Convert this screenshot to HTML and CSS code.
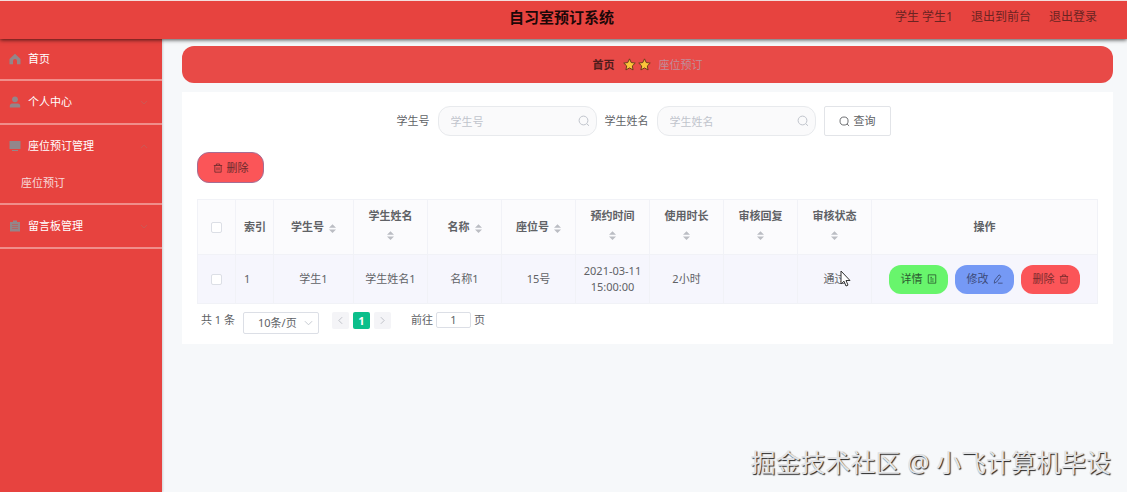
FILE: index.html
```html
<!DOCTYPE html>
<html lang="zh-CN">
<head>
    <meta charset="UTF-8">
    <meta name="viewport" content="width=device-width, initial-scale=1.0">
    <title>自习室预订系统</title>
    <link rel="stylesheet" href="styles.css">
</head>
<body>
    <!-- 公用图标 -->
    <svg class="icon-defs" aria-hidden="true">
        <symbol id="icon-search" viewBox="0 0 12 12">
            <circle cx="5.5" cy="5.5" r="4.4" fill="none" stroke="currentColor"/>
            <path d="M8.8 8.8l2.2 2" stroke="currentColor" fill="none"/>
        </symbol>
        <symbol id="icon-delete" viewBox="0 0 12 12">
            <path d="M1 3h10M4 3V1.2h4V3M2.2 3v8h7.6V3M4.8 5.2v3.6M7.2 5.2v3.6" stroke="currentColor" fill="none"/>
        </symbol>
        <symbol id="icon-arrow" viewBox="0 0 10 6">
            <path d="M1 1l4 4 4-4" stroke="currentColor" fill="none"/>
        </symbol>
        <symbol id="icon-sort" viewBox="0 0 8 10">
            <path d="M4 0l4 4H0zM4 10l4-4H0z" fill="currentColor"/>
        </symbol>
        <symbol id="icon-star" viewBox="0 0 12 12">
            <path d="M6 .8l1.6 3.4 3.7.5-2.7 2.6.7 3.7L6 9.200l-3.300 1.800.7-3.700L.7 4.700l3.700-.5z" fill="#fbc53a" stroke="#6b3a1c" stroke-width=".9" stroke-linejoin="round"/>
        </symbol>
    </svg>

    <header class="header">
        <h1 class="title">自习室预订系统</h1>
        <nav class="user-nav">
            <span>学生 学生1</span>
            <a href="#">退出到前台</a>
            <a href="#">退出登录</a>
        </nav>
    </header>

    <div class="layout">
        <aside class="sidebar">
            <ul class="menu">
                <li class="menu-item home">
                    <a href="#">
                        <svg class="menu-icon" viewBox="0 0 12 12"><path d="M6 .8L.5 6v5.200H4V8a2 2 0 0 1 4 0v3.200h3.500V6z" fill="currentColor"/></svg>
                        <span>首页</span>
                    </a>
                </li>
                <li class="menu-item">
                    <a href="#">
                        <svg class="menu-icon" viewBox="0 0 12 12"><circle cx="6" cy="3.300" r="2.900" fill="currentColor"/><path d="M.8 11.500V10q0-2.500 2.500-2.500h5.400q2.500 0 2.500 2.500v1.500z" fill="currentColor"/></svg>
                        <span>个人中心</span>
                        <svg class="menu-arrow"><use href="#icon-arrow"/></svg>
                    </a>
                </li>
                <li class="menu-item opened">
                    <a href="#">
                        <svg class="menu-icon" viewBox="0 0 12 12"><path d="M.5 1h11v8h-11zM3 10h6v1H3z" fill="currentColor"/></svg>
                        <span>座位预订管理</span>
                        <svg class="menu-arrow"><use href="#icon-arrow"/></svg>
                    </a>
                    <ul class="submenu">
                        <li><a href="#">座位预订</a></li>
                    </ul>
                </li>
                <li class="menu-item">
                    <a href="#">
                        <svg class="menu-icon" viewBox="0 0 12 12"><path d="M1 2h10v9.500H1zM4 .5h4V2H4z" fill="currentColor"/><path d="M3 4.500h6M3 6.500h6M3 8.500h6" stroke="#c9524f" stroke-width=".6"/></svg>
                        <span>留言板管理</span>
                        <svg class="menu-arrow"><use href="#icon-arrow"/></svg>
                    </a>
                </li>
            </ul>
        </aside>

        <main class="main">
            <nav class="breadcrumb">
                <a href="#" class="crumb-home">首页</a>
                <span class="stars">
                    <svg><use href="#icon-star"/></svg>
                    <svg><use href="#icon-star"/></svg>
                </span>
                <a href="#" class="crumb-current">座位预订</a>
            </nav>

            <section class="card">
                <form class="search-form">
                    <label for="code">学生号</label>
                    <div class="search-input">
                        <input type="text" id="code" placeholder="学生号">
                        <svg><use href="#icon-search"/></svg>
                    </div>
                    <label for="name">学生姓名</label>
                    <div class="search-input">
                        <input type="text" id="name" placeholder="学生姓名">
                        <svg><use href="#icon-search"/></svg>
                    </div>
                    <button type="button" class="btn-query"><svg><use href="#icon-search"/></svg>查询</button>
                </form>

                <button type="button" class="btn btn-remove"><svg><use href="#icon-delete"/></svg>删除</button>

                <table class="table">
                    <colgroup>
                        <col class="col-small"><col class="col-small"><col class="col-code">
                        <col span="7" class="col-data">
                        <col class="col-action">
                    </colgroup>
                    <thead>
                        <tr>
                            <th><input type="checkbox" aria-label="全选"></th>
                            <th class="index">索引</th>
                            <th>学生号<svg class="sort"><use href="#icon-sort"/></svg></th>
                            <th class="wrap">学生姓名<svg class="sort"><use href="#icon-sort"/></svg></th>
                            <th>名称<svg class="sort"><use href="#icon-sort"/></svg></th>
                            <th>座位号<svg class="sort"><use href="#icon-sort"/></svg></th>
                            <th class="wrap">预约时间<svg class="sort"><use href="#icon-sort"/></svg></th>
                            <th class="wrap">使用时长<svg class="sort"><use href="#icon-sort"/></svg></th>
                            <th class="wrap">审核回复<svg class="sort"><use href="#icon-sort"/></svg></th>
                            <th class="wrap">审核状态<svg class="sort"><use href="#icon-sort"/></svg></th>
                            <th>操作</th>
                        </tr>
                    </thead>
                    <tbody>
                        <tr>
                            <td><input type="checkbox" aria-label="选择第1行"></td>
                            <td class="index">1</td>
                            <td>学生1</td>
                            <td>学生姓名1</td>
                            <td>名称1</td>
                            <td>15号</td>
                            <td>2021-03-11 15:00:00</td>
                            <td>2小时</td>
                            <td></td>
                            <td>
                                <span class="status">通过
                                    <svg class="pointer" viewBox="0 0 11 17"><path d="M1 1v13l3-2.800 2 4.800 2-.9-2-4.600h4z" fill="#fff" stroke="#333"/></svg>
                                </span>
                            </td>
                            <td>
                                <div class="actions">
                                    <button type="button" class="btn btn-detail">详情<svg viewBox="0 0 12 12"><path d="M1.500 1h9v10h-9zM4 4h2M4 6h4M4 8.500h4" stroke="currentColor" fill="none"/></svg></button>
                                    <button type="button" class="btn btn-edit">修改<svg viewBox="0 0 12 12"><path d="M2 7.500L7.200 1l2.300 1.800L4.500 9.500 1.500 11zM6 11h5.500" stroke="currentColor" fill="none"/></svg></button>
                                    <button type="button" class="btn btn-delete">删除<svg><use href="#icon-delete"/></svg></button>
                                </div>
                            </td>
                        </tr>
                    </tbody>
                </table>

                <div class="pagination">
                    <span>共 1 条</span>
                    <div class="page-size">
                        <select aria-label="每页条数">
                            <option>10条/页</option>
                            <option>20条/页</option>
                        </select>
                        <svg><use href="#icon-arrow"/></svg>
                    </div>
                    <div class="pager">
                        <button type="button" aria-label="上一页" disabled><svg viewBox="0 0 6 10"><path d="M5 1L1 5l4 4" stroke="currentColor" fill="none"/></svg></button>
                        <button type="button" class="active">1</button>
                        <button type="button" aria-label="下一页" disabled><svg viewBox="0 0 6 10"><path d="M1 1l4 4-4 4" stroke="currentColor" fill="none"/></svg></button>
                    </div>
                    <div class="jump">
                        <label for="page">前往</label>
                        <input type="text" id="page" value="1">
                        <span>页</span>
                    </div>
                </div>
            </section>
        </main>
    </div>

    <div class="watermark">掘金技术社区 @ 小飞计算机毕设</div>
</body>
</html>
```
FILE: styles.css
```css
* {
    box-sizing: border-box;
}

body {
    margin: 0;
    min-height: 100vh;
    display: flex;
    flex-direction: column;
    background-color: #f6f8fa;
    font-family: "Noto Sans", "Noto Sans CJK SC", sans-serif;
    font-size: 11px;
    line-height: 16px;
    color: #606266;
}

a {
    color: inherit;
    text-decoration: none;
}

button,
input,
select {
    font: inherit;
    color: inherit;
}

button {
    cursor: pointer;
}

ul {
    list-style: none;
    margin: 0;
    padding: 0;
}

.icon-defs {
    display: none;
}

/* 顶部 */
.header {
    position: relative;
    z-index: 1;
    display: grid;
    grid-template-columns: 1fr auto 1fr;
    align-items: center;
    height: 39px;
    padding: 0 30px 6px 26px;
    border-top: 1px solid #f3dedd;
    background-color: #e7433f;
    box-shadow: 0 1px 4px rgba(0, 0, 0, 0.7);
}

.title {
    grid-column: 2;
    margin: 0;
    font-size: 15px;
    line-height: 20px;
    color: #1c0808;
}

.user-nav {
    display: flex;
    justify-content: flex-end;
    gap: 18px;
    font-size: 12px;
    color: #6b2422;
}

.layout {
    flex: 1;
    display: flex;
}

/* 侧边菜单 */
.sidebar {
    width: 162px;
    background-color: #e7433f;
    box-shadow: 1px 0 2px rgba(0, 0, 0, 0.15);
}

.menu-item {
    border-bottom: 2px solid #f08e8a;
    color: #fff;
}

.menu-item > a {
    display: flex;
    align-items: center;
    gap: 7px;
    height: 42px;
    padding: 0 14px 0 9px;
}

.menu-item.home > a {
    height: 40px;
}

.menu-icon {
    width: 12px;
    height: 12px;
    color: #93868a;
}

.menu-arrow {
    width: 8px;
    height: 5px;
    margin-left: auto;
    color: #c4605c;
}

.opened .menu-arrow {
    transform: rotate(180deg);
}

.submenu a {
    display: block;
    padding: 8px 0 12px 21px;
    color: #f7dada;
}

/* 内容区 */
.main {
    flex: 1;
    min-width: 0;
    padding: 7px 14px 20px 20px;
}

.breadcrumb {
    display: flex;
    justify-content: center;
    align-items: center;
    gap: 8px;
    height: 37px;
    margin-bottom: 9px;
    border-radius: 12px;
    background-color: #e84a47;
}

.crumb-home {
    color: #501c1c;
    font-weight: bold;
}

.crumb-current {
    color: #c08f9b;
}

.stars {
    display: flex;
    gap: 2px;
}

.stars svg {
    width: 13px;
    height: 13px;
}

.card {
    padding: 14px 15px 10px;
    background-color: #fff;
}

.search-form {
    display: flex;
    justify-content: center;
    align-items: center;
    gap: 8px;
    margin-right: 8px;
}

.search-input {
    position: relative;
    width: 159px;
}

.search-input input {
    display: block;
    width: 100%;
    height: 30px;
    padding: 0 28px 0 12px;
    border: 1px solid #e8eaed;
    border-radius: 12px;
    background-color: #fafafb;
}

.search-input input::placeholder {
    color: #c0c4cc;
}

.search-input svg {
    position: absolute;
    top: 9px;
    right: 7px;
    width: 12px;
    height: 12px;
    color: #c0c4cc;
}

.btn-query {
    display: flex;
    justify-content: center;
    align-items: center;
    gap: 4px;
    width: 67px;
    height: 30px;
    padding: 0;
    border: 1px solid #e2e4e8;
    border-radius: 2px;
    background-color: #fff;
}

.btn-query svg {
    width: 11px;
    height: 11px;
}

.btn {
    display: flex;
    justify-content: center;
    align-items: center;
    gap: 4px;
    width: 59px;
    height: 29px;
    padding: 0;
    border: none;
    border-radius: 12px;
    color: #444;
}

.btn svg {
    width: 10px;
    height: 10px;
}

.btn-remove {
    width: 67px;
    height: 31px;
    margin: 16px 0;
    border: 1px solid #a56d94;
    background-color: #fb5558;
    color: #6b2b2d;
}

.btn-detail {
    background-color: #68f56c;
    color: #2c5a30;
}

.btn-edit {
    background-color: #7599f5;
    color: #3c4a78;
}

.btn-delete {
    background-color: #fb5558;
    color: #7a2b2d;
}

/* 表格 */
.table {
    width: 100%;
    table-layout: fixed;
    border-collapse: collapse;
    border: 1px solid #f1f2f7;
}

.col-small {
    width: 38px;
}

.col-code {
    width: 80px;
}

.col-data {
    width: 74px;
}

.col-action {
    width: auto;
}

.table th,
.table td {
    padding: 0 6px;
    border: 1px solid #f1f2f7;
    text-align: center;
}

.table th {
    height: 55px;
    background-color: #fbfbfd;
}

.table th.wrap {
    padding-bottom: 6px;
}

.table td {
    height: 49px;
    background-color: #f6f6fd;
}

.table th.index,
.table td.index {
    padding: 0 0 0 8px;
    text-align: left;
}

.table input {
    appearance: none;
    display: block;
    width: 11px;
    height: 11px;
    margin: 0 auto;
    border: 1px solid #dcdfe6;
    border-radius: 2px;
    background-color: #fff;
}

.sort {
    width: 7px;
    height: 9px;
    margin-left: 5px;
    vertical-align: middle;
    color: #bbbdc3;
}

.wrap .sort {
    display: block;
    margin: 7px auto 0;
}

.status {
    position: relative;
}

.pointer {
    position: absolute;
    top: -1px;
    left: 16px;
    width: 11px;
    height: 17px;
}

.actions {
    display: flex;
    justify-content: center;
    gap: 7px;
}

/* 分页 */
.pagination {
    display: flex;
    align-items: flex-start;
    padding: 8px 0 0 4px;
}

.page-size {
    position: relative;
    margin: 0 13px 0 8px;
}

.page-size select {
    appearance: none;
    display: block;
    width: 76px;
    height: 22px;
    padding: 0 14px;
    border: 1px solid #dcdfe6;
    border-radius: 2px;
    background-color: #fff;
}

.page-size svg {
    position: absolute;
    top: 8px;
    right: 6px;
    width: 9px;
    height: 6px;
    color: #c0c4cc;
}

.pager {
    display: flex;
    gap: 4px;
}

.pager button {
    display: flex;
    justify-content: center;
    align-items: center;
    width: 17px;
    height: 17px;
    padding: 0;
    border: none;
    border-radius: 2px;
    background-color: #f4f4f7;
    color: #b4b7bf;
}

.pager button.active {
    background-color: #0bbf8b;
    color: #fff;
    font-weight: bold;
}

.pager svg {
    width: 5px;
    height: 9px;
}

.jump {
    display: flex;
    gap: 3px;
    margin-left: 20px;
}

.jump input {
    width: 35px;
    height: 16px;
    padding: 0;
    border: 1px solid #dcdfe6;
    border-radius: 2px;
    text-align: center;
}

.watermark {
    position: absolute;
    right: 16px;
    bottom: 12px;
    font-size: 25px;
    line-height: 36px;
    color: #e2e3e5;
    text-shadow: 1px 1px 1px #222;
}
```
